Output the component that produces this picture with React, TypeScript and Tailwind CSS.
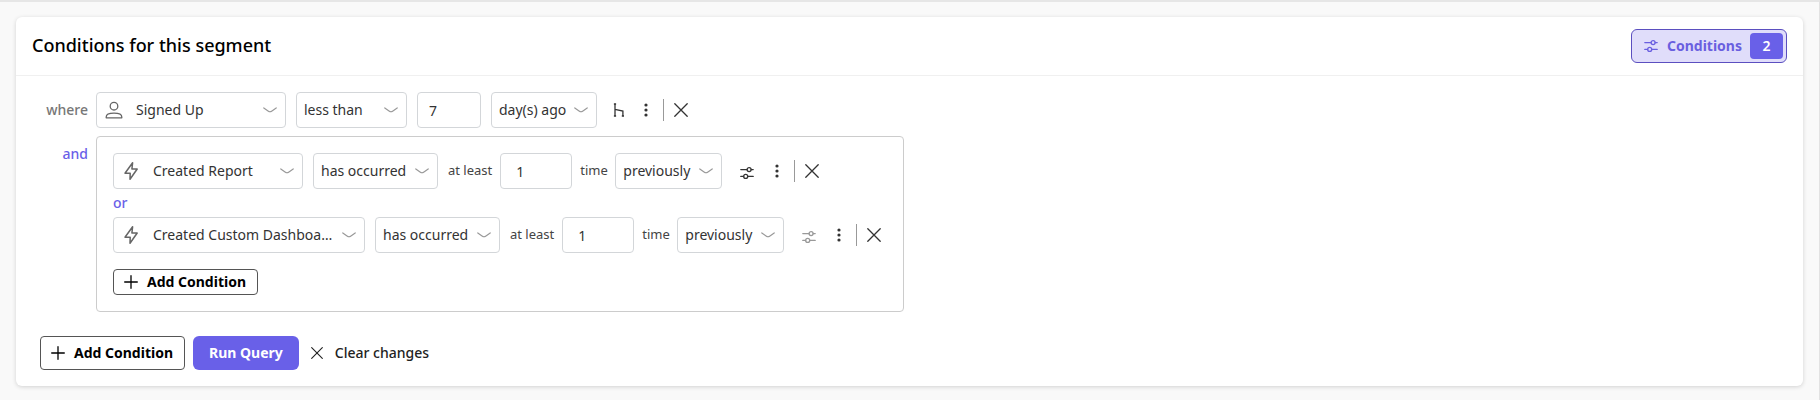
import type { ReactNode } from "react";
import clsx from "clsx";

type IconProps = {
  className?: string;
};

function ChevronIcon({ className }: IconProps) {
  return (
    <svg viewBox="0 0 14 6" fill="none" stroke="currentColor" strokeWidth="1.2" strokeLinecap="round" strokeLinejoin="round" className={clsx("w-3.5 h-1.5", className)}>
      <path d="M0.8 0.9 5.4 4.2Q7 5.3 8.6 4.2L13.2 0.9" />
    </svg>
  );
}

function UserIcon({ className }: IconProps) {
  return (
    <svg viewBox="0 0 18 18" fill="none" stroke="currentColor" strokeWidth="1.3" strokeLinejoin="round" className={clsx("size-[18px]", className)}>
      <circle cx="9" cy="5.2" r="3.8" />
      <path d="M1.2 16.8v-.9c0-2.4 2.6-3.8 7.8-3.8s7.8 1.4 7.8 3.8v.9z" />
    </svg>
  );
}

function BoltIcon({ className }: IconProps) {
  return (
    <svg viewBox="0 0 18 18" fill="none" stroke="currentColor" strokeWidth="1.5" strokeLinejoin="round" className={clsx("size-[18px]", className)}>
      <path d="M10.6 0.8 3 11.2H8.2L8 17.2 15.2 7H9.9z" />
    </svg>
  );
}

function SlidersIcon({ className }: IconProps) {
  return (
    <svg viewBox="0 0 14 14" fill="none" stroke="currentColor" strokeWidth="1.3" strokeLinecap="round" className={clsx("w-3.5 h-3.5", className)}>
      <path d="M0.8 3.6H7M11.2 3.6H13.2M0.8 10.4H3.6M7.8 10.4H13.2" />
      <circle cx="9.1" cy="3.6" r="2" />
      <circle cx="5.7" cy="10.4" r="2" />
    </svg>
  );
}

function BranchIcon() {
  return (
    <svg viewBox="0 0 12 14" fill="none" stroke="currentColor" strokeWidth="1.3" className="w-3 h-3.5">
      <path d="M2 1V13M2 6.4 9.9 8V13" />
      <path d="M0.9 1H3.1M0.9 13H3.1M8.8 13H11" strokeWidth="1.6" />
    </svg>
  );
}

function DotsIcon() {
  return (
    <svg viewBox="0 0 4 14" fill="currentColor" className="w-1 h-3.5">
      <circle cx="2" cy="2" r="1.6" />
      <circle cx="2" cy="7" r="1.6" />
      <circle cx="2" cy="12" r="1.6" />
    </svg>
  );
}

function CloseIcon({ className }: IconProps) {
  return (
    <svg viewBox="0 0 14 14" fill="none" stroke="currentColor" strokeWidth="1.3" strokeLinecap="round" className={className}>
      <path d="M0.8 0.8 13.2 13.2M13.2 0.8 0.8 13.2" />
    </svg>
  );
}

function PlusIcon() {
  return (
    <svg viewBox="0 0 14 14" fill="none" stroke="currentColor" strokeWidth="1.3" strokeLinecap="round" className="size-3.5">
      <path d="M7 0.7V13.3M0.7 7H13.3" />
    </svg>
  );
}

type SelectProps = {
  label: string;
  value: string;
  width: string;
  icon?: ReactNode;
};

function Select({ label, value, width, icon }: SelectProps) {
  return (
    <div className={clsx("relative shrink-0 text-[#666]", width)}>
      {icon && <span className="absolute left-[9px] top-[9px] pointer-events-none">{icon}</span>}
      <select
        aria-label={label}
        defaultValue={value}
        className={clsx(
          "appearance-none block w-full h-9 rounded border border-[#d3d6d9] bg-white text-sm text-[#333] truncate",
          icon ? "pl-[39px] pr-[30px]" : "pl-[7px] pr-7"
        )}
      >
        <option>{value}</option>
      </select>
      <ChevronIcon className="absolute right-[9px] top-[15px] pointer-events-none text-[#999]" />
    </div>
  );
}

type RowActionsProps = {
  children: ReactNode;
};

function RowActions({ children }: RowActionsProps) {
  return (
    <div className="flex items-center text-[#333]">
      {children}
      <button type="button" aria-label="More options" className="ml-5 w-1">
        <DotsIcon />
      </button>
      <span className="ml-[15px] h-[22px] w-px bg-[#999]" />
      <button type="button" aria-label="Remove condition" className="pl-2.5 pr-1.5">
        <CloseIcon className="size-3.5" />
      </button>
    </div>
  );
}

type EventConditionProps = {
  event: string;
  width: string;
  filtered?: boolean;
};

function EventCondition({ event, width, filtered }: EventConditionProps) {
  return (
    <div className="flex items-center">
      <Select label="Event" value={event} width={width} icon={<BoltIcon />} />
      <div className="ml-2.5 flex items-center gap-2">
        <Select label="Occurrence" value="has occurred" width="w-[125px]" />
        <label className="flex items-center gap-2 pl-0.5 text-[13px] text-[#444]">
          at least
          <input
            type="number"
            defaultValue={1}
            className="w-[72px] h-9 rounded border border-[#d3d6d9] bg-white pl-[15px] text-sm text-[#333]"
          />
        </label>
        <span className="w-[27px] text-[13px] text-[#444]">time</span>
        <Select label="Time frame" value="previously" width="w-[107px]" />
      </div>
      <div className="ml-[18px]">
        <RowActions>
          <button type="button" aria-label="Filter event" className={clsx("mt-1 mr-px", !filtered && "text-[#999]")}>
            <SlidersIcon />
          </button>
        </RowActions>
      </div>
    </div>
  );
}

type AddConditionProps = {
  height: string;
};

function AddCondition({ height }: AddConditionProps) {
  return (
    <button
      type="button"
      className={clsx("flex w-[145px] items-center gap-[9px] rounded border border-[#555] bg-white px-2.5 text-sm font-bold text-black", height)}
    >
      <PlusIcon />
      Add Condition
    </button>
  );
}

export default function App() {
  return (
    <main className="min-h-screen border-t-2 border-r border-t-[#e6e6e6] border-r-[#e2e2e2] bg-[#f9f9f9] px-4 pt-[15px] pb-3.5 font-['Noto_Sans',sans-serif]">
      <section className="rounded-md bg-white shadow-[0_1px_4px_rgba(0,0,0,0.16)]">
        {/* Header */}
        <header className="flex h-[59px] items-center justify-between border-b border-[#f0f0f0] px-4">
          <h2 className="pb-0.5 text-lg font-medium text-black">Conditions for this segment</h2>
          <button
            type="button"
            className="flex h-[34px] items-center rounded-md border border-[#5b4fc0] bg-[#e0ddfa] pl-3 pr-[3px] text-sm font-bold text-[#6a5fe0]"
          >
            <SlidersIcon />
            <span className="ml-[9px] mr-2">Conditions</span>
            <span className="flex h-[26px] w-[33px] items-center justify-center rounded bg-[#6960e8] font-semibold text-white">2</span>
          </button>
        </header>

        <form className="px-6 pt-4 pb-4" onSubmit={(e) => e.preventDefault()}>
          {/* Conditions */}
          <div className="flex items-center gap-2">
            <span className="w-12 text-right text-sm font-medium text-[#777]">where</span>
            <div className="flex items-center gap-2.5">
              <Select label="Event" value="Signed Up" width="w-[190px]" icon={<UserIcon />} />
              <Select label="Comparison" value="less than" width="w-[111px]" />
              <input
                type="number"
                aria-label="Amount"
                defaultValue={7}
                className="w-16 h-9 rounded border border-[#d3d6d9] bg-white pl-[11px] text-sm text-[#333]"
              />
              <Select label="Unit" value="day(s) ago" width="w-[106px]" />
              <div className="ml-1.5">
                <RowActions>
                  <button type="button" aria-label="Branch condition" className="-mr-px">
                    <BranchIcon />
                  </button>
                </RowActions>
              </div>
            </div>
          </div>

          <div className="mt-2 flex items-start gap-2">
            <span className="mt-2 w-12 text-right text-sm font-medium text-[#6960e8]">and</span>
            <div className="rounded border border-[#ccc] p-4">
              <EventCondition event="Created Report" width="w-[190px]" filtered />
              <div className="flex h-7 items-center text-sm font-medium text-[#6960e8]">or</div>
              <EventCondition event="Created Custom Dashboard" width="w-[252px]" />
              <div className="mt-4">
                <AddCondition height="h-[26px]" />
              </div>
            </div>
          </div>

          {/* Actions */}
          <div className="mt-6 flex items-center gap-2">
            <AddCondition height="h-[34px]" />
            <button type="submit" className="h-[34px] rounded-md bg-[#6960e8] px-4 text-sm font-bold text-white">
              Run Query
            </button>
            <button type="button" className="ml-1 flex items-center gap-3 text-sm font-medium text-[#222]">
              <CloseIcon className="size-3" />
              Clear changes
            </button>
          </div>
        </form>
      </section>
    </main>
  );
}
